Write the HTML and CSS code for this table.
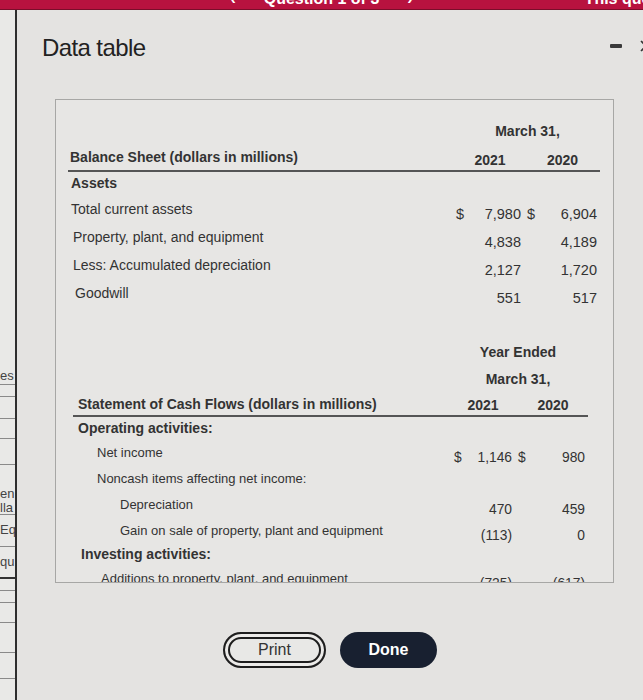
FILE: index.html
```html
<!DOCTYPE html>
<html lang="en">
<head>
<meta charset="utf-8">
<title>Data table</title>
<link rel="stylesheet" href="styles.css">
</head>
<body>
<div class="topbar">
  <div class="tb-left"></div>
  <div class="tb-center"><span>&lsaquo;</span><span>Question 1 of 3</span><span>&rsaquo;</span></div>
  <div class="tb-right"><span>This question: 1 point(s)</span></div>
</div>
<div class="layout">
  <aside class="bgstrip">
    <div class="s-gap"></div>
    <div class="s-row s-h30">es</div>
    <div class="s-row s-h12"></div>
    <div class="s-row s-h22"></div>
    <div class="s-row s-h20"></div>
    <div class="s-row s-h26"></div>
    <div class="s-row s-h50">en<br>lla</div>
    <div class="s-row s-h32">Eq</div>
    <div class="s-row s-h32 s-thick">qu</div>
    <div class="s-row s-h12"></div>
    <div class="s-row s-h12"></div>
    <div class="s-row s-h20"></div>
    <div class="s-row s-h30"></div>
    <div class="s-row s-h26"></div>
  </aside>
  <main class="modal">
    <header class="modal-head">
      <h1 class="title">Data table</h1>
      <span class="minimize"></span>
      <svg class="close" width="14" height="14" viewBox="0 0 14 14"><path d="M2 2 L12 12 M12 2 L2 12" stroke="#333" stroke-width="1.6" fill="none"/></svg>
    </header>
    <div class="scrollbox">
      <section class="tbl t1">
        <div class="r-head1"><span></span><span class="hc span2 b">March 31,</span></div>
        <div class="r-head"><span class="b">Balance Sheet (dollars in millions)</span><span class="hc b">2021</span><span class="hc b">2020</span></div>
        <div class="r-row r-sec"><span class="b">Assets</span></div>
        <div class="r-row"><span class="lab">Total current assets</span><span class="d">$</span><span class="v">7,980</span><span class="d">$</span><span class="v">6,904</span></div>
        <div class="r-row"><span class="lab ind1">Property, plant, and equipment</span><span class="d"></span><span class="v">4,838</span><span class="d"></span><span class="v">4,189</span></div>
        <div class="r-row"><span class="lab ind1">Less: Accumulated depreciation</span><span class="d"></span><span class="v">2,127</span><span class="d"></span><span class="v">1,720</span></div>
        <div class="r-row"><span class="lab ind2">Goodwill</span><span class="d"></span><span class="v">551</span><span class="d"></span><span class="v">517</span></div>
      </section>
      <section class="tbl t2">
        <div class="r-head1"><span></span><span class="hc span2 b">Year Ended</span></div>
        <div class="r-head1 r-head1b"><span></span><span class="hc span2 b">March 31,</span></div>
        <div class="r-head"><span class="b">Statement of Cash Flows (dollars in millions)</span><span class="hc b">2021</span><span class="hc b">2020</span></div>
        <div class="r-row r-sec"><span class="b">Operating activities:</span></div>
        <div class="r-row"><span class="lab ind-a">Net income</span><span class="d">$</span><span class="v">1,146</span><span class="d">$</span><span class="v">980</span></div>
        <div class="r-row"><span class="lab ind-a">Noncash items affecting net income:</span></div>
        <div class="r-row"><span class="lab ind-b">Depreciation</span><span class="d"></span><span class="v">470</span><span class="d"></span><span class="v">459</span></div>
        <div class="r-row"><span class="lab ind-b">Gain on sale of property, plant and equipment</span><span class="d"></span><span class="v">(113)</span><span class="d"></span><span class="v">0</span></div>
        <div class="r-row r-sec"><span class="b ind-s">Investing activities:</span></div>
        <div class="r-row"><span class="lab ind-c">Additions to property, plant, and equipment</span><span class="d"></span><span class="v">(725)</span><span class="d"></span><span class="v">(617)</span></div>
      </section>
    </div>
    <div class="actions">
      <button class="btn print" type="button">Print</button>
      <button class="btn done" type="button">Done</button>
    </div>
  </main>
</div>
</body>
</html>
```

FILE: styles.css
```css
* { box-sizing: border-box; }
html, body { margin: 0; padding: 0; }
body {
  width: 643px;
  height: 700px;
  overflow: hidden;
  background: #e4e3e1;
  font-family: "Liberation Sans", Arial, sans-serif;
  color: #333;
}

/* top red bar */
.topbar {
  height: 10px;
  background: #b8123f;
  border-bottom: 1px solid #7a0d2a;
  overflow: hidden;
  display: grid;
  grid-template-columns: 1fr auto 1fr;
  color: #fff;
  font-weight: bold;
  font-size: 16px;
  line-height: 16px;
}
.tb-center {
  display: flex;
  gap: 28px;
  margin-top: -9px;
}
.tb-right {
  margin-top: -9px;
  padding-left: 172px;
  white-space: nowrap;
  overflow: hidden;
}

.layout {
  display: flex;
  height: 690px;
}

/* background page strip at left */
.bgstrip {
  width: 17px;
  flex: none;
  background: #e9e9e7;
  border-right: 2px solid #2e2e2e;
  overflow: hidden;
  font-size: 13px;
  line-height: 14px;
  color: #444;
  white-space: nowrap;
}
.s-gap { height: 345px; }
.s-row { border-bottom: 1px solid #8a8a8a; padding-top: 8px; }
.s-h12 { height: 12px; padding-top: 0; }
.s-h20 { height: 20px; }
.s-h22 { height: 22px; }
.s-h26 { height: 26px; }
.s-h30 { height: 30px; padding-top: 14px; }
.s-h32 { height: 32px; }
.s-h50 { height: 50px; padding-top: 22px; }
.s-thick { border-bottom: 2px solid #333; }

/* modal */
.modal {
  flex: 1;
  min-width: 0;
  display: flex;
  flex-direction: column;
}
.modal-head {
  display: flex;
  align-items: center;
  height: 68px;
  padding-left: 25px;
  padding-top: 8px;
}
.title {
  margin: 0;
  font-weight: normal;
  font-size: 24px;
  letter-spacing: -0.6px;
  color: #222;
  flex: 1;
}
.minimize {
  width: 12px;
  height: 4px;
  border-radius: 1px;
  background: #3a3a3a;
  margin-right: 17px;
  margin-top: -4px;
}
.close {
  flex: none;
  margin-right: -10px;
  margin-top: -4px;
}

.scrollbox {
  margin-left: 38px;
  margin-top: 21px;
  width: 559px;
  height: 484px;
  border: 1px solid #a7a7a5;
  background: #e7e6e4;
  overflow: hidden;
  padding-top: 21px;
}

.tbl { color: #333; }
.t1 { font-size: 14px; }
.t2 { font-size: 13px; }
.b { font-weight: bold; font-size: 14px; }
.t1 { margin-left: 12px; width: 532px; }
.t2 { margin-left: 17px; width: 515px; margin-top: 36px; }

.r-head1, .r-head, .r-row { display: grid; align-items: start; white-space: nowrap; }
.t1 .r-head1, .t1 .r-head { grid-template-columns: 387px 70px 75px; }
.t1 .r-row { grid-template-columns: 382px 20px 51px 24px 52px 3px; }
.t2 .r-head1, .t2 .r-head { grid-template-columns: 375px 70px 70px; }
.t2 .r-row { grid-template-columns: 377px 20px 42px 28px 45px 3px; }

.span2 { grid-column: 2 / 4; }
.hc { text-align: center; }

.r-head1 { height: 26px; line-height: 20px; }
.t2 .r-head1 { height: 27px; }
.t2 .r-head1b { height: 25px; }
.r-head {
  height: 25px;
  line-height: 20px;
  border-bottom: 2px solid #555;
}
.t2 .r-head { height: 23px; }
.r-head .hc { padding-top: 3px; }
.t2 .r-head .hc { padding-top: 1px; }
.t1 .r-head > span:first-child { padding-left: 2px; }
.t2 .r-head > span:first-child { padding-left: 5px; }

.r-row { height: 28px; line-height: 18px; padding-top: 6px; }
.t1 .r-sec { height: 22px; padding-top: 2px; }
.t2 .r-row { height: 26px; padding-top: 5px; }
.t2 .r-sec { height: 22px; padding-top: 2px; }

.lab { padding-left: 3px; }
.t1 .r-sec .b { padding-left: 3px; }
.ind1 { padding-left: 5px; }
.ind2 { padding-left: 7px; }
.t2 .r-sec .b { padding-left: 5px; }
.ind-s { padding-left: 8px !important; }
.ind-a { padding-left: 24px; }
.ind-b { padding-left: 47px; }
.ind-c { padding-left: 28px; }

.d { padding-left: 6px; padding-top: 5px; }
.t2 .d { padding-left: 4px; }
.t2 .d + .v + .d { padding-left: 6px; }
.v { text-align: right; padding-top: 5px; }
.t1 .v, .t1 .d { font-size: 14.5px; }
.t2 .v, .t2 .d { font-size: 13.8px; }

/* buttons */
.actions {
  display: flex;
  justify-content: center;
  gap: 14px;
  margin-top: 49px;
}
.btn {
  font-family: "Liberation Sans", Arial, sans-serif;
  font-size: 16px;
  height: 36px;
  border-radius: 18px;
  cursor: pointer;
}
.print {
  width: 103px;
  background: #e8e8e6;
  color: #333;
  border: 2px solid #1e1e1e;
  box-shadow: inset 0 0 0 3px #ecebe9, inset 0 0 0 5px #1e1e1e;
}
.done {
  width: 97px;
  background: #182030;
  color: #fff;
  border: none;
  font-weight: bold;
}
```
